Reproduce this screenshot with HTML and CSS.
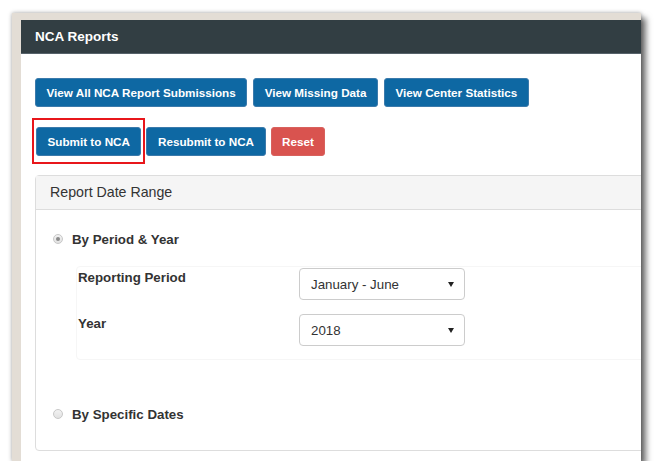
FILE: index.html
```html
<!DOCTYPE html>
<html>
<head>
<meta charset="utf-8">
<link rel="stylesheet" href="styles.css">
</head>
<body>
<div class="window">
  <div class="app">
    <div class="topbar">NCA Reports</div>
    <div class="content">
      <div class="btn-row row-1">
        <span class="btn btn-primary">View All NCA Report Submissions</span>
        <span class="btn btn-primary">View Missing Data</span>
        <span class="btn btn-primary">View Center Statistics</span>
      </div>
      <div class="btn-row row-2">
        <span class="highlight"><span class="btn btn-primary">Submit to NCA</span></span>
        <span class="btn btn-primary">Resubmit to NCA</span>
        <span class="btn btn-danger">Reset</span>
      </div>
      <div class="panel">
        <div class="panel-heading">Report Date Range</div>
        <div class="panel-body">
          <div class="radio-row">
            <span class="radio checked"></span>
            <span class="radio-label">By Period &amp; Year</span>
          </div>
          <div class="well">
            <div class="field-label">Reporting Period</div>
            <div class="select"><span>January - June</span><span class="caret"></span></div>
            <div class="field-label">Year</div>
            <div class="select"><span>2018</span><span class="caret"></span></div>
          </div>
          <div class="radio-row radio-row-2">
            <span class="radio"></span>
            <span class="radio-label">By Specific Dates</span>
          </div>
        </div>
      </div>
    </div>
  </div>
</div>
</body>
</html>
```
FILE: styles.css
```css
html, body {
  margin: 0;
  background: #ffffff;
}
body {
  padding: 13px 0 0 12px;
  font-family: "Liberation Sans", Arial, sans-serif;
  color: #333333;
}
.window {
  width: 629px;
  height: 448px;
  box-sizing: border-box;
  padding: 7px 0 0 9px;
  background: #e3ddd5;
  box-shadow: 0 0 4px rgba(0, 0, 0, 0.35), 5px 5px 6px rgba(0, 0, 0, 0.55);
  overflow: hidden;
}
.app {
  width: 620px;
  height: 100%;
  background: #ffffff;
  overflow: hidden;
}
.topbar {
  height: 34px;
  line-height: 34px;
  background: #323e43;
  border-bottom: 1px solid #56626a;
  box-sizing: border-box;
  color: #ffffff;
  font-size: 13.5px;
  font-weight: bold;
  padding-left: 14px;
}
.content {
  padding: 24px 0 0 14px;
}
.btn-row {
  display: flex;
  gap: 6px;
}
.row-1 {
  margin-bottom: 20px;
}
.row-2 {
  padding-left: 1px;
  gap: 5px;
}
.btn {
  display: inline-block;
  height: 29px;
  line-height: 27px;
  box-sizing: border-box;
  padding: 0 10.5px;
  border-radius: 3px;
  color: #ffffff;
  font-size: 11.7px;
  font-weight: bold;
  white-space: nowrap;
}
.btn-primary {
  background: #0e68a3;
  border: 1px solid #3b7aab;
}
.btn-danger {
  background: #d9534f;
  border: 1px solid #d8615d;
}
.highlight {
  position: relative;
  display: inline-block;
}
.highlight::after {
  content: "";
  position: absolute;
  top: -9px;
  bottom: -8px;
  left: -4px;
  right: -4px;
  border: 2px solid #e8161b;
}
.panel {
  margin-top: 19px;
  width: 640px;
  height: 276px;
  box-sizing: border-box;
  border: 1px solid #dddddd;
  border-radius: 4px;
}
.panel-heading {
  height: 34px;
  line-height: 33px;
  box-sizing: border-box;
  background: #f5f5f5;
  border-bottom: 1px solid #dddddd;
  padding-left: 14px;
  font-size: 14.2px;
  color: #333333;
}
.panel-body {
  padding: 20px 0 0 17px;
}
.radio-row {
  display: flex;
  align-items: center;
  height: 18px;
}
.radio {
  width: 10px;
  height: 10px;
  box-sizing: border-box;
  border-radius: 50%;
  border: 1px solid #c8c8c8;
  background: linear-gradient(#f2f2f2, #e2e2e2);
  margin-right: 9px;
  position: relative;
}
.radio.checked::after {
  content: "";
  position: absolute;
  left: 2px;
  top: 2px;
  width: 4px;
  height: 4px;
  border-radius: 50%;
  background: #8a8a8a;
}
.radio-label {
  font-size: 13.3px;
  font-weight: bold;
  color: #333333;
}
.well {
  margin: 18px 0 0 23px;
  padding: 1px 0 13px 1px;
  border: 1px solid #f6f6f6;
  border-radius: 4px;
  display: grid;
  grid-template-columns: 221px 166px;
  row-gap: 14px;
}
.field-label {
  font-size: 13.3px;
  font-weight: bold;
  line-height: 18px;
  padding-top: 1px;
}
.select {
  height: 32px;
  box-sizing: border-box;
  border: 1px solid #cccccc;
  border-radius: 4px;
  display: flex;
  align-items: center;
  justify-content: space-between;
  padding: 0 10px 0 11px;
  font-size: 13.3px;
  color: #333333;
}
.caret {
  width: 0;
  height: 0;
  border-left: 3px solid transparent;
  border-right: 3px solid transparent;
  border-top: 5px solid #222222;
}
.radio-row-2 {
  margin-top: 45px;
}
```
